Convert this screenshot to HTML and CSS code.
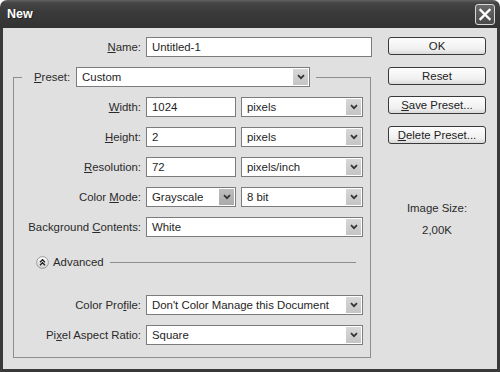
FILE: index.html
```html
<!DOCTYPE html>
<html>
<head>
<meta charset="utf-8">
<link rel="stylesheet" href="styles.css">
</head>
<body>
<div class="window">
  <div class="titlebar">
    <span class="title">New</span>
    <div class="close">
      <svg width="20" height="21" viewBox="0 0 20 21"><path d="M5.5 6 L14.5 15 M14.5 6 L5.5 15" stroke="#fff" stroke-width="2.4" stroke-linecap="square"/></svg>
    </div>
  </div>
  <div class="body">
    <div class="main">
      <div class="row name-row">
        <span class="lbl"><u>N</u>ame:</span>
        <div class="field w-name">Untitled-1</div>
      </div>
      <fieldset class="group">
        <legend class="legend">
          <div class="legend-inner">
            <span><u>P</u>reset:</span>
            <div class="field combo w-preset"><span class="val">Custom</span><span class="arrow"><svg width="8" height="6" viewBox="0 0 8 6"><path d="M1 1.2 L4 4.2 L7 1.2" fill="none" stroke="#333" stroke-width="1.7"/></svg></span></div>
          </div>
        </legend>
        <div class="rows">
          <div class="row">
            <span class="lbl"><u>W</u>idth:</span>
            <div class="field w-num">1024</div>
            <div class="field combo w-unit"><span class="val">pixels</span><span class="arrow"><svg width="8" height="6" viewBox="0 0 8 6"><path d="M1 1.2 L4 4.2 L7 1.2" fill="none" stroke="#333" stroke-width="1.7"/></svg></span></div>
          </div>
          <div class="row">
            <span class="lbl"><u>H</u>eight:</span>
            <div class="field w-num">2</div>
            <div class="field combo w-unit"><span class="val">pixels</span><span class="arrow"><svg width="8" height="6" viewBox="0 0 8 6"><path d="M1 1.2 L4 4.2 L7 1.2" fill="none" stroke="#333" stroke-width="1.7"/></svg></span></div>
          </div>
          <div class="row">
            <span class="lbl"><u>R</u>esolution:</span>
            <div class="field w-num">72</div>
            <div class="field combo w-unit"><span class="val">pixels/inch</span><span class="arrow"><svg width="8" height="6" viewBox="0 0 8 6"><path d="M1 1.2 L4 4.2 L7 1.2" fill="none" stroke="#333" stroke-width="1.7"/></svg></span></div>
          </div>
          <div class="row">
            <span class="lbl">Color <u>M</u>ode:</span>
            <div class="field combo w-num"><span class="val">Grayscale</span><span class="arrow dark"><svg width="8" height="6" viewBox="0 0 8 6"><path d="M1 1.2 L4 4.2 L7 1.2" fill="none" stroke="#333" stroke-width="1.7"/></svg></span></div>
            <div class="field combo w-unit"><span class="val">8 bit</span><span class="arrow"><svg width="8" height="6" viewBox="0 0 8 6"><path d="M1 1.2 L4 4.2 L7 1.2" fill="none" stroke="#333" stroke-width="1.7"/></svg></span></div>
          </div>
          <div class="row">
            <span class="lbl">Background <u>C</u>ontents:</span>
            <div class="field combo w-full"><span class="val">White</span><span class="arrow"><svg width="8" height="6" viewBox="0 0 8 6"><path d="M1 1.2 L4 4.2 L7 1.2" fill="none" stroke="#333" stroke-width="1.7"/></svg></span></div>
          </div>
        </div>
        <div class="advanced">
          <svg class="adv-icon" width="13" height="13" viewBox="0 0 13 13">
            <defs><linearGradient id="g" x1="0" y1="0" x2="0" y2="1"><stop offset="0" stop-color="#ffffff"/><stop offset="1" stop-color="#cfcfcf"/></linearGradient></defs>
            <circle cx="6.5" cy="6.5" r="5.9" fill="url(#g)" stroke="#9a9a9a" stroke-width="1"/>
            <path d="M4 6.2 L6.5 3.7 L9 6.2 M4 9.2 L6.5 6.7 L9 9.2" fill="none" stroke="#222" stroke-width="1.3"/>
          </svg>
          <span class="adv-text">Advanced</span>
          <span class="adv-line"></span>
        </div>
        <div class="rows rows2">
          <div class="row">
            <span class="lbl">Color Pro<u>f</u>ile:</span>
            <div class="field combo w-full"><span class="val">Don't Color Manage this Document</span><span class="arrow"><svg width="8" height="6" viewBox="0 0 8 6"><path d="M1 1.2 L4 4.2 L7 1.2" fill="none" stroke="#333" stroke-width="1.7"/></svg></span></div>
          </div>
          <div class="row">
            <span class="lbl">Pi<u>x</u>el Aspect Ratio:</span>
            <div class="field combo w-full"><span class="val">Square</span><span class="arrow"><svg width="8" height="6" viewBox="0 0 8 6"><path d="M1 1.2 L4 4.2 L7 1.2" fill="none" stroke="#333" stroke-width="1.7"/></svg></span></div>
          </div>
        </div>
      </fieldset>
    </div>
    <div class="side">
      <div class="btn">OK</div>
      <div class="btn">Reset</div>
      <div class="btn"><span><u>S</u>ave Preset...</span></div>
      <div class="btn"><span><u>D</u>elete Preset...</span></div>
      <div class="info">
        <div>Image Size:</div>
        <div>2,00K</div>
      </div>
    </div>
  </div>
</div>
</body>
</html>
```
FILE: styles.css
```css
html, body {
  margin: 0;
  padding: 0;
  background: #ffffff;
}

body {
  font-family: "Liberation Sans", Arial, sans-serif;
  font-size: 11.4px;
  color: #2a2a2a;
}

u {
  text-decoration: underline;
  text-underline-offset: 1px;
}

.window {
  width: 500px;
  height: 372px;
  box-sizing: border-box;
  padding: 0 3px 3px 3px;
  border-radius: 7px 7px 0 0;
  background: linear-gradient(#626262 0px, #454545 3px, #3a3a3a 12px, #333333 28px, #3a3a3a 29px, #3a3a3a 100%);
  display: flex;
  flex-direction: column;
}

.titlebar {
  height: 28px;
  flex: none;
  display: flex;
  align-items: center;
  justify-content: space-between;
  padding: 0 2px 0 4px;
}

.title {
  color: #ffffff;
  font-weight: bold;
  font-size: 12.5px;
  text-shadow: 1px 1px 0 #222;
  margin-top: -1px;
}

.close {
  width: 20px;
  height: 21px;
  box-sizing: border-box;
  border: 1px solid #d8d8d8;
  border-radius: 3px;
  background: linear-gradient(#6a6a6a, #4a4a4a);
  display: flex;
  align-items: center;
  justify-content: center;
  margin-top: 1px;
}

.close svg {
  display: block;
  margin: -1px;
}

.body {
  flex: 1;
  background: #e0e0e0;
  display: flex;
  gap: 16px;
  padding: 9px 10px 0 10px;
}

.main {
  width: 359px;
  display: flex;
  flex-direction: column;
}

.row {
  display: flex;
  align-items: center;
  height: 20px;
  gap: 5px;
}

.lbl {
  text-align: right;
  white-space: nowrap;
}

.name-row .lbl {
  width: 128px;
}

.field {
  height: 20px;
  box-sizing: border-box;
  border: 1px solid #7c7c7c;
  background: #ffffff;
  padding-left: 5px;
  display: flex;
  align-items: center;
  white-space: nowrap;
  color: #1e1e1e;
}

.combo {
  padding: 1px;
  align-items: stretch;
}

.combo .val {
  flex: 1;
  display: flex;
  align-items: center;
  padding-left: 4px;
  overflow: hidden;
}

.arrow {
  width: 15px;
  flex: none;
  display: flex;
  align-items: center;
  justify-content: center;
  background: linear-gradient(#d8d8d8, #c4c4c4);
}

.arrow.dark {
  background: linear-gradient(#bdbdbd, #aaaaaa);
}

.arrow svg {
  display: block;
}

.w-name { width: 226px; }
.w-preset { width: 234px; }
.w-num { width: 90px; }
.w-unit { width: 122px; }
.w-full { width: 217px; }

.group {
  margin: 10px 0 0 0;
  padding: 0 0 12px 0;
  width: 358px;
  min-width: 0;
  box-sizing: border-box;
  border: 1px solid #8e8e8e;
}

.legend {
  margin-left: 8px;
  padding: 0 6px 0 12px;
}

.legend-inner {
  display: flex;
  align-items: center;
  gap: 6px;
  height: 20px;
}

.rows {
  padding-top: 10px;
  display: flex;
  flex-direction: column;
  gap: 10px;
}

.rows .lbl {
  width: 127px;
}

.rows2 {
  padding-top: 0;
  margin-top: 26px;
}

.advanced {
  margin-top: 18px;
  height: 14px;
  display: flex;
  align-items: center;
  padding: 0 14px 0 22px;
}

.adv-icon {
  display: block;
  flex: none;
}

.adv-text {
  margin-left: 4px;
}

.adv-line {
  flex: 1;
  height: 1px;
  background: #8e8e8e;
  margin-left: 6px;
}

.side {
  width: 98px;
  display: flex;
  flex-direction: column;
  gap: 11.5px;
}

.btn {
  height: 18px;
  box-sizing: border-box;
  border: 1px solid #3a3a3a;
  border-radius: 3px;
  background: linear-gradient(#fdfdfd, #f0f0f0 70%, #d9d9d9);
  display: flex;
  align-items: center;
  justify-content: center;
  color: #222222;
}

.info {
  margin-top: 42px;
  text-align: center;
  line-height: 22px;
  color: #2a2a2a;
}
```
